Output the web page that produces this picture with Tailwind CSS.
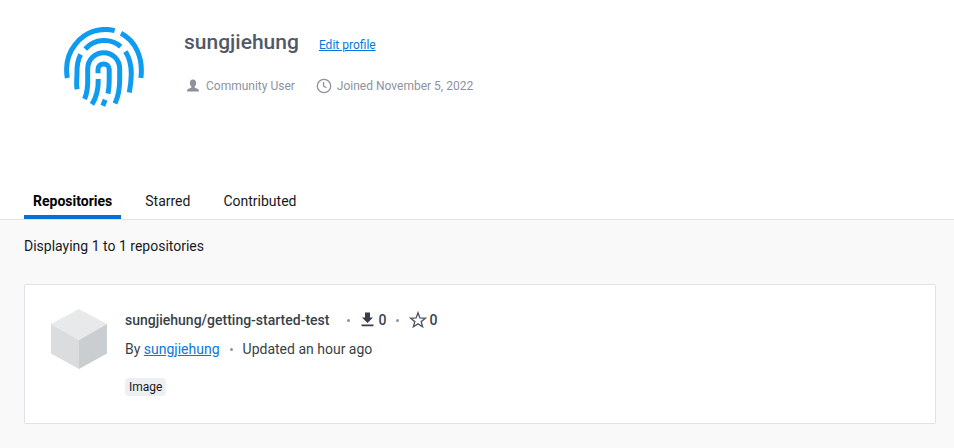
<!DOCTYPE html>
<html lang="en">
<head>
<meta charset="utf-8">
<meta name="viewport" content="width=device-width, initial-scale=1">
<title>sungjiehung</title>
<script src="https://cdn.jsdelivr.net/npm/@tailwindcss/browser@4"></script>
</head>
<body class="flex min-h-screen flex-col bg-[#f9f9fa] font-[Roboto,'Liberation_Sans',sans-serif] text-sm leading-5 text-[#17191e]">
<header class="border-b border-[#e1e2e6] bg-white">
  <div class="flex gap-10 px-16 pt-[27px] pb-[76px]">
    <svg class="size-20 shrink-0" viewBox="0 0 80 80" fill="none" stroke="#0f9cf0" stroke-width="5" aria-hidden="true">
      <path d="M3.3 51C1.500 40 3.500 27 11.500 17.200A37.500 37.500 0 0 1 50.700 3.600"/>
      <path d="M57 6.200C71 13.500 79.500 30 76.900 51"/>
      <path d="M21.200 22C30.500 11.600 46.500 10.800 56.700 19.600"/>
      <path d="M16.700 27.500C13 34 12.800 39 13 46C13 52 12 57 13.200 62.300"/>
      <path d="M61.500 24.500C66 32 67.400 38 67.300 47C67.200 54 66.500 59 65.300 65.500"/>
      <path d="M20.500 72C24 64.500 24 58 23.700 50V42C23.700 32.500 31 25.700 39.700 25.700S55.700 32.500 55.700 42V52C55.700 61 54.500 69 51 76.500"/>
      <path d="M34 46.300V42.500C34 39 36.500 37.100 39.700 37.100S45.200 39 45.200 42.500V54C45.200 59 44.800 62 44 66.700"/>
      <path d="M34.200 52C34.600 62 32.500 70 28 77.400"/>
      <path d="M41.200 72.800L38.800 78.800"/>
    </svg>
    <div>
      <div class="flex items-baseline gap-5">
        <h1 class="text-[21px] leading-[30px] font-medium text-[#505968]">sungjiehung</h1>
        <a href="#" class="text-xs text-[#0878e0] underline">Edit profile</a>
      </div>
      <div class="mt-5 flex gap-5 text-xs text-[#8c939f]">
        <span class="flex items-center gap-1">
          <svg class="size-[18px]" viewBox="0 0 18 18" fill="#8c919c" aria-hidden="true"><path d="M9 2.500C6.800 2.500 5.900 4 5.900 6C5.900 7.400 6.400 8.700 7.300 9.600V10.800C5.500 11.500 3.600 11.900 3.200 13L3 14.500H15L14.800 13C14.400 11.900 12.500 11.500 10.700 10.800V9.600C11.600 8.700 12.100 7.400 12.100 6C12.100 4 11.200 2.500 9 2.500Z"/></svg>
          Community User
        </span>
        <span class="flex items-center gap-1">
          <svg class="size-[18px]" viewBox="0 0 18 18" fill="none" stroke="#8c919c" stroke-width="1.300" aria-hidden="true"><circle cx="9" cy="9" r="6.700"/><path d="M8.600 5V9.200L11.500 10.800"/></svg>
          Joined November 5, 2022
        </span>
      </div>
    </div>
  </div>
  <nav class="flex gap-[15px] px-6" aria-label="Profile">
    <a href="#" aria-current="page" class="border-b-4 border-[#086dd7] px-[9px] pt-2 pb-1 font-bold text-black">Repositories</a>
    <a href="#" class="px-[9px] pt-2 pb-1">Starred</a>
    <a href="#" class="px-[9px] pt-2 pb-1">Contributed</a>
  </nav>
</header>
<main class="flex-1 pt-4 pr-[18px] pb-6 pl-6">
  <p>Displaying 1 to 1 repositories</p>
  <article class="mt-7 flex gap-4 rounded-xs border border-[#e1e2e6] bg-white px-6 pt-6 pb-[27px] text-[#393f49]">
    <svg class="size-15 shrink-0" viewBox="0 0 60 60" aria-hidden="true"><path fill="#e8e9eb" d="M30 0L58 15L30 31L2 15Z"/><path fill="#dadcde" d="M2 15L30 31V60L2 44.500Z"/><path fill="#cbced1" d="M58 15L30 31V60L58 44.500Z"/></svg>
    <div class="pt-px">
      <div class="flex items-center gap-2.5 font-medium">
        <h2 class="mr-2">sungjiehung/getting-started-test</h2>
        <span class="size-[3px] rounded-full bg-[#8c939f]"></span>
        <span class="flex items-center gap-1"><svg class="h-4 w-3.5" viewBox="0 0 14 16" fill="#393f49" aria-label="Downloads"><path d="M5 0.500H10V5.500H13L7.500 11L2 5.500H5ZM1.500 12.500H13.500V14.200H1.500Z"/></svg>0</span>
        <span class="size-[3px] rounded-full bg-[#8c939f]"></span>
        <span class="flex items-center gap-0.5"><svg class="size-[18px]" viewBox="0 0 18 18" fill="none" stroke="#505968" stroke-width="1.400" aria-label="Stars"><path d="M9 1.800L10.900 6.900L16.400 7.200L12.200 10.600L13.600 15.800L9 12.900L4.400 15.800L5.800 10.600L1.600 7.200L7.100 6.900Z"/></svg>0</span>
      </div>
      <p class="mt-[9px] flex items-center gap-2.5">
        <span>By <a href="#" class="text-[#0878e0] underline">sungjiehung</a></span>
        <span class="size-[3px] rounded-full bg-[#8c939f]"></span>
        <span>Updated an hour ago</span>
      </p>
      <span class="mt-[19px] inline-block rounded-sm bg-[#edf0f3] px-1 text-xs leading-[18px] text-[#17191e]">Image</span>
    </div>
  </article>
</main>
</body>
</html>
